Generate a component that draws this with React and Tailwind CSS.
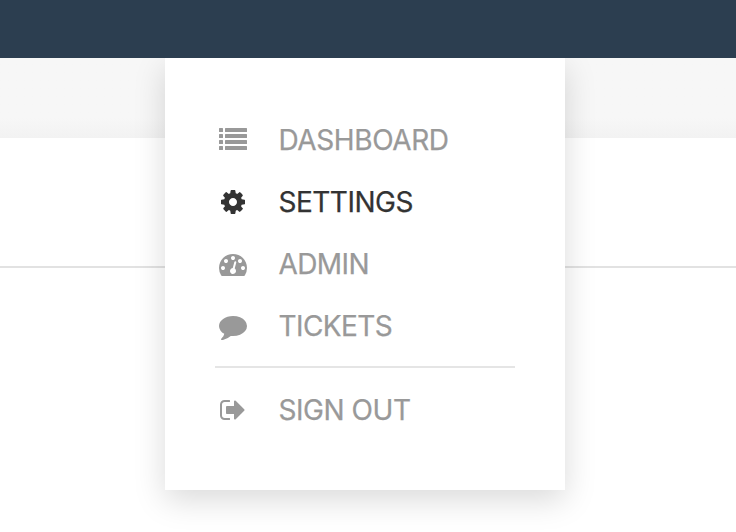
const icons = {
  list: (
    <g>
      {[128, 512, 896, 1280].map((y) => (
        <g key={y}>
          <rect x="0" y={y} width="256" height="256" rx="32" />
          <rect x="384" y={y} width="1408" height="256" rx="32" />
        </g>
      ))}
    </g>
  ),
  cog: (
    <path d="M1152 896q0-106-75-181t-181-75-181 75-75 181 75 181 181 75 181-75 75-181zm512-109v222q0 12-8 23t-20 13l-185 28q-19 54-39 91 35 50 107 138 10 12 10 25t-9 23q-27 37-99 108t-94 71q-12 0-26-9l-138-108q-44 23-91 38-16 136-29 186-7 28-36 28h-222q-14 0-24.5-8.5t-11.5-21.5l-28-184q-49-16-90-37l-141 107q-10 9-25 9-14 0-25-11-126-114-165-168-7-10-7-23 0-12 8-23 15-21 51-66.5t54-70.5q-27-50-41-99l-183-27q-13-2-21-12.5t-8-23.5v-222q0-12 8-23t19-13l186-28q14-46 39-92-40-57-107-138-10-12-10-24 0-10 9-23 26-36 98.5-107.5t94.5-71.5q13 0 26 10l138 107q44-23 91-38 16-136 29-186 7-28 36-28h222q14 0 24.5 8.5t11.5 21.5l28 184q49 16 90 37l142-107q9-9 24-9 13 0 25 10 129 119 165 170 7 8 7 22 0 12-8 23-15 21-51 66.5t-54 70.5q26 50 41 98l183 28q13 2 21 12.5t8 23.5z" />
  ),
  gauge: (
    <path d="M384 1152q0-53-37.5-90.5t-90.5-37.5-90.5 37.5-37.5 90.5 37.5 90.5 90.5 37.5 90.5-37.5 37.5-90.5zm192-448q0-53-37.5-90.5t-90.5-37.5-90.5 37.5-37.5 90.5 37.5 90.5 90.5 37.5 90.5-37.5 37.5-90.5zm428 481l101-382q6-26-7.5-48.5t-38.5-29.5-48 6.5-30 39.5l-101 382q-60 5-107 43.5t-63 98.5q-20 77 20 146t117 89 146-20 89-117q16-60-6-117t-72-91zm660-33q0-53-37.5-90.5t-90.5-37.5-90.5 37.5-37.5 90.5 37.5 90.5 90.5 37.5 90.5-37.5 37.5-90.5zm-640-640q0-53-37.5-90.5t-90.5-37.5-90.5 37.5-37.5 90.5 37.5 90.5 90.5 37.5 90.5-37.5 37.5-90.5zm448 192q0-53-37.5-90.5t-90.5-37.5-90.5 37.5-37.5 90.5 37.5 90.5 90.5 37.5 90.5-37.5 37.5-90.5zm320 448q0 261-141 483-19 29-54 29h-1402q-35 0-54-29-141-221-141-483 0-182 71-348t191-286 286-191 348-71 348 71 286 191 191 286 71 348z" />
  ),
  comment: (
    <path d="M1792 896q0 174-120 321.5t-326 233-450 85.5q-70 0-145-8-198 175-460 242-49 14-114 22-17 2-30.5-9t-17.5-29v-1q-3-4-.5-12t2-10 4.5-9.5l6-9 7-8.5 8-9q7-8 31-34.5t34.5-38 31-39.5 32.5-51 27-59 26-76q-157-89-247.5-220t-90.5-281q0-130 71-248.5t191-204.5 286-136.5 348-50.5q244 0 450 85.5t326 233 120 321.5z" />
  ),
  signOut: (
    <path
      transform="translate(64 0)"
      d="M640 1440q0 4 1 20t.5 26.5-3 23.5-10 19.5-20.5 6.5h-320q-119 0-203.5-84.5t-84.5-203.5v-704q0-119 84.5-203.5t203.5-84.5h320q13 0 22.5 9.5t9.5 22.5q0 4 1 20t.5 26.5-3 23.5-10 19.5-20.5 6.5h-320q-66 0-113 47t-47 113v704q0 66 47 113t113 47h312l11.5 1 11.5 3 8 5.5 7 9 2 13.5zm928-544q0 26-19 45l-544 544q-19 19-45 19t-45-19-19-45v-288h-448q-26 0-45-19t-19-45v-384q0-26 19-45t45-19h448v-288q0-26 19-45t45-19 45 19l544 544q19 19 19 45z"
    />
  ),
};

function MenuItem({ icon, active = false, tracking = "tracking-[-0.6px]", children }) {
  return (
    <a
      className={`flex h-[62px] items-center gap-[31.5px] pl-1 text-[28px] leading-none ${
        active ? "text-[#333333]" : "text-[#999999]"
      }`}
    >
      <svg viewBox="0 0 1792 1792" className="size-7 shrink-0 fill-current">
        {icons[icon]}
      </svg>
      <span className={`whitespace-nowrap [-webkit-text-stroke:0.25px_currentColor] ${tracking}`}>{children}</span>
    </a>
  );
}

export default function App() {
  return (
    <div className="relative h-[532px] w-[736px] overflow-hidden bg-white font-['Inter',sans-serif]">
      <header className="relative z-20 h-[58px] bg-[#2c3e50]" />
      <div className="h-20 bg-linear-to-b from-[#f7f7f7] from-75% to-[#f2f2f2]" />
      <div className="h-[130px] border-b-2 border-[#e2e2e2]" />
      <nav className="absolute top-[58px] left-[165px] z-10 h-[432px] w-[400px] bg-white px-[50px] pt-[51px] shadow-[0_10px_30px_rgba(0,0,0,0.15)]">
        <MenuItem icon="list" tracking="tracking-[-0.4px]">DASHBOARD</MenuItem>
        <MenuItem icon="cog" active tracking="tracking-[-0.5px]">SETTINGS</MenuItem>
        <MenuItem icon="gauge">ADMIN</MenuItem>
        <MenuItem icon="comment">TICKETS</MenuItem>
        <hr className="mt-[9px] mb-[11px] border-t-2 border-[#e5e5e5]" />
        <MenuItem icon="signOut" tracking="tracking-[-0.45px]">SIGN OUT</MenuItem>
      </nav>
    </div>
  );
}
